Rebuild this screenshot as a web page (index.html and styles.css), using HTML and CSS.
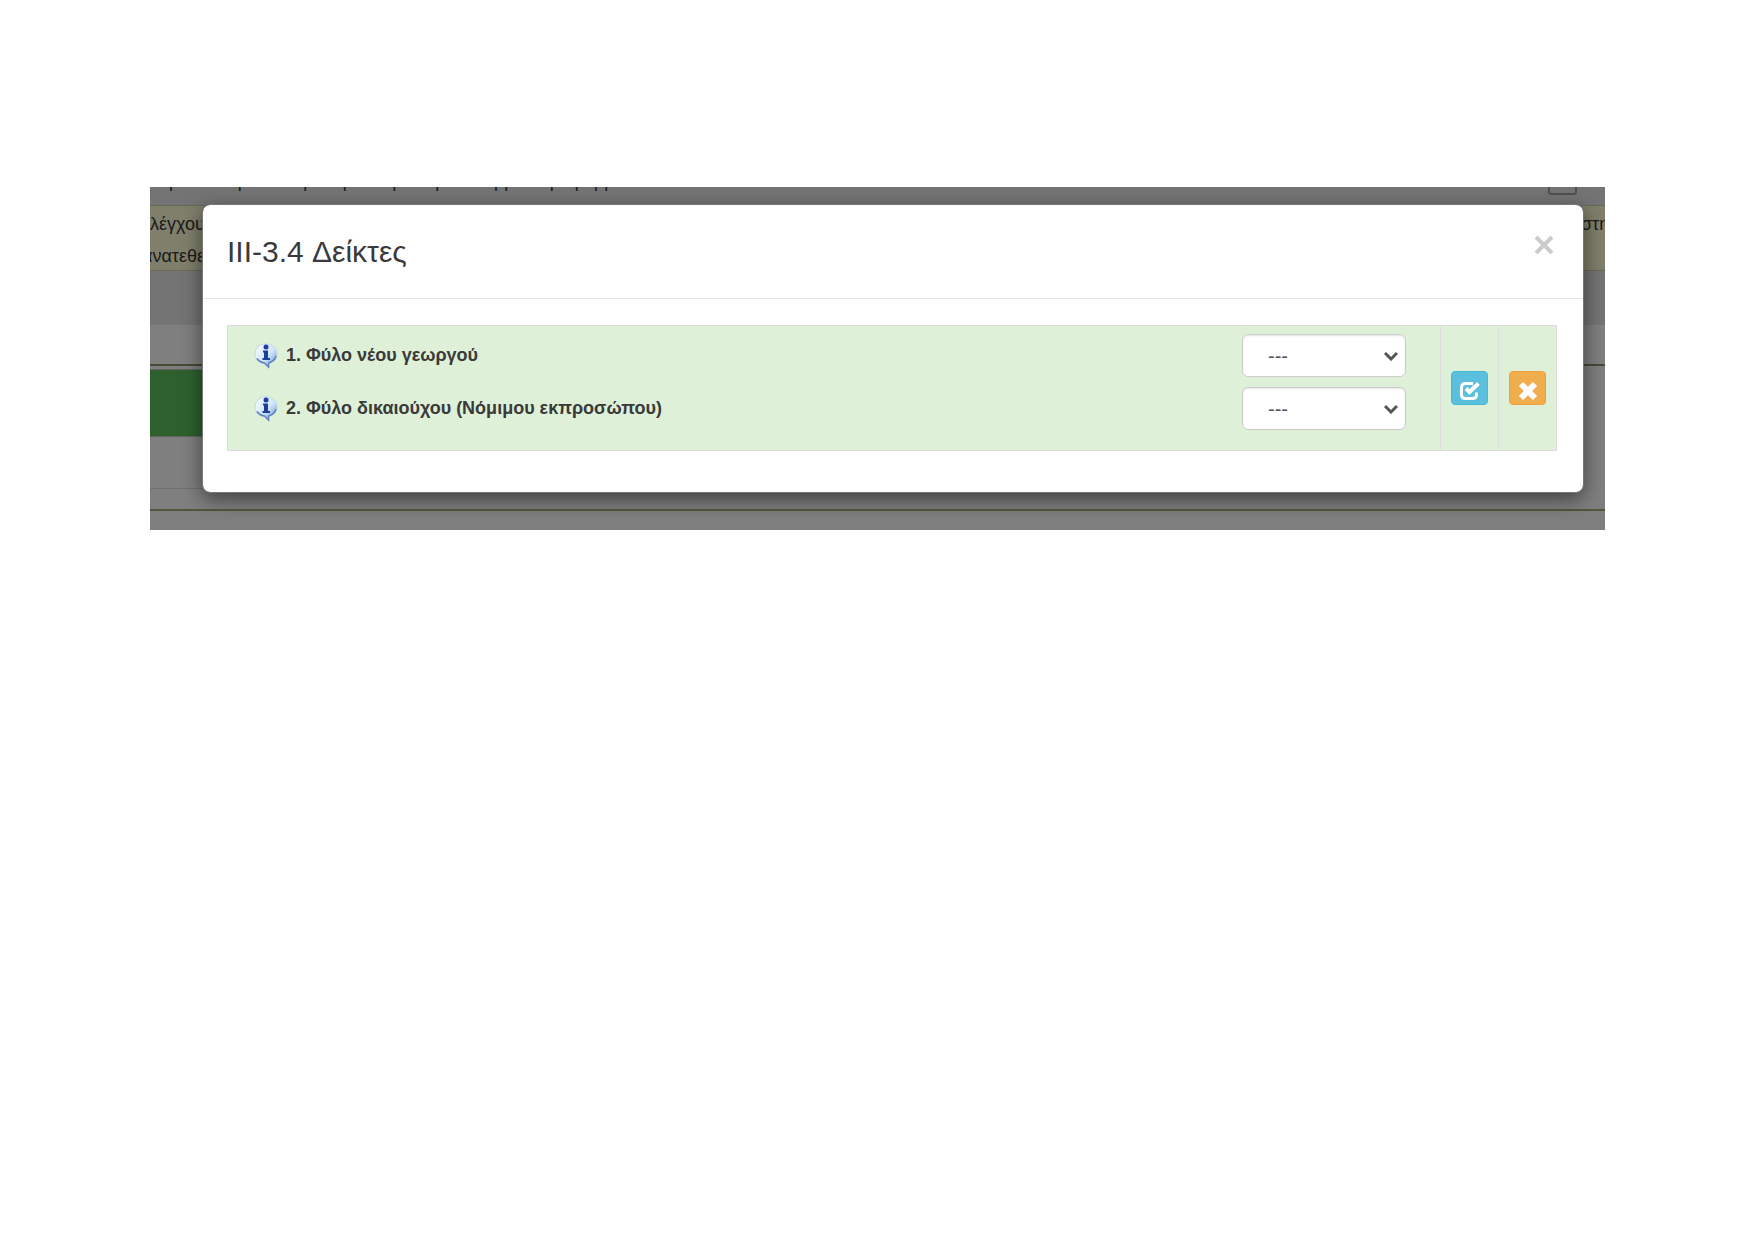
FILE: index.html
```
<!DOCTYPE html>
<html lang="el">

<head>
    <meta charset="UTF-8">
    <title>III-3.4 Δείκτες</title>
    <link rel="stylesheet" href="styles.css">
</head>

<body>
    <div class="screen">
        <div class="page">
            <div class="page-title">
                <span class="page-title-text">νορα λέοι τμ κάτον ρ κα ρολο η οτιε ρακτι ε ρρ κα η τι ρκρρ</span>
                <span class="page-tool"></span>
            </div>
            <div class="notice">
                <p class="notice-text">ελέγχου<br>ανατεθε</p>
                <p class="notice-text notice-end">στη</p>
            </div>
            <div class="toolbar"></div>
            <div class="row-head"></div>
            <div class="row-list">
                <div class="row-active"></div>
                <div class="row-plain"></div>
            </div>
            <div class="row-last"></div>
        </div>

        <div class="modal" role="dialog" aria-labelledby="modal-title">
            <div class="modal-header">
                <h1 class="modal-title" id="modal-title">III-3.4 Δείκτες</h1>
                <button type="button" class="close" aria-label="Κλείσιμο">
                    <svg width="20" height="20" viewBox="0 0 20 20">
                        <path d="M2 2L18 18M18 2L2 18" stroke="#cbcbcb" stroke-width="4" />
                    </svg>
                </button>
            </div>

            <form class="modal-body">
                <div class="indicators">
                    <div class="fields">
                        <div class="field">
                            <svg class="info" width="24" height="26" viewBox="0 0 24 26">
                                <use href="#info-icon" />
                            </svg>
                            <label for="farmer">1. Φύλο νέου γεωργού</label>
                            <select id="farmer" class="form-control">
                                <option>---</option>
                            </select>
                        </div>
                        <div class="field">
                            <svg class="info" width="24" height="26" viewBox="0 0 24 26">
                                <use href="#info-icon" />
                            </svg>
                            <label for="beneficiary">2. Φύλο δικαιούχου (Νόμιμου εκπροσώπου)</label>
                            <select id="beneficiary" class="form-control">
                                <option>---</option>
                            </select>
                        </div>
                    </div>
                    <div class="action">
                        <button type="button" class="btn btn-info" aria-label="Αποθήκευση">
                            <svg width="22" height="20" viewBox="0 0 22 20">
                                <path d="M14 2.500H6.500Q2.500 2.500 2.500 6.500V13.500Q2.500 17.500 6.500 17.500H13.500Q17.500 17.500 17.500 13.500V11.500" fill="none" stroke="#fff" stroke-width="3" />
                                <path d="M6.500 8.500L10.500 12L19.500 3" fill="none" stroke="#5bc0de" stroke-width="6" />
                                <path d="M7 7.500L10.500 11L19.500 2.500" fill="none" stroke="#fff" stroke-width="4" />
                            </svg>
                        </button>
                    </div>
                    <div class="action">
                        <button type="button" class="btn btn-warning" aria-label="Ακύρωση">
                            <svg width="20" height="20" viewBox="0 0 20 20">
                                <path d="M3 3L17 17M17 3L3 17" stroke="#fff" stroke-width="6" />
                            </svg>
                        </button>
                    </div>
                </div>
            </form>
        </div>
    </div>

    <!-- shared info bubble -->
    <svg class="sprite" width="0" height="0">
        <defs>
            <linearGradient id="bubble" x1="0" y1="0" x2="1" y2="1">
                <stop offset="0" stop-color="#fff" />
                <stop offset="0.550" stop-color="#cfe4fb" />
                <stop offset="1" stop-color="#5b86cf" />
            </linearGradient>
            <symbol id="info-icon" viewBox="0 0 24 26">
                <path d="M12 1C5.500 1 1 5.500 1 11C1 16 4.500 19.500 10 20.500L15 25V20.500C20 19 23 15.500 23 11C23 5.500 18.500 1 12 1Z" fill="url(#bubble)" stroke="#c3d5ea" />
                <path d="M3 15.500C5 18.500 7.500 19.500 10.500 20L14.500 24V20C18 19 21 17 22 13" fill="none" stroke="#5e83c3" stroke-width="1.500" />
                <circle cx="12" cy="4" r="2.500" fill="#1c3f9b" />
                <path d="M9 7.500H14V15H16V17H8.500V15H10V9.500H9Z" fill="#1c3f9b" />
            </symbol>
        </defs>
    </svg>
</body>

</html>
```
FILE: styles.css
```
* {
    box-sizing: border-box;
}

body {
    margin: 0;
    padding: 187px 150px;
    background-color: #fff;
    color: #3a3a3a;
    font-family: "Liberation Sans", Arial, sans-serif;
    font-size: 18px;
}

/* the dimmed page and the dialog share one grid cell */
.screen {
    display: grid;
    grid-template-columns: minmax(0, 1fr);
    overflow: hidden;
    background-color: #7f7f7f;
}

.page,
.modal {
    grid-area: 1 / 1;
}

.page {
    color: #1a1a1a;
}

.page-title {
    display: flex;
    justify-content: space-between;
    align-items: flex-start;
    height: 18px;
    padding-right: 28px;
    background-color: #747474;
}

.page-title-text {
    margin-top: -16px;
    line-height: 20px;
    white-space: nowrap;
}

.page-tool {
    width: 29px;
    height: 8px;
    border: 2px solid #505050;
    border-top: 0;
    border-radius: 0 0 3px 3px;
}

.notice {
    display: flex;
    justify-content: space-between;
    padding-top: 2px;
    border-top: 1px solid #696957;
    border-bottom: 1px solid #696957;
    background-color: #7f7f6b;
    line-height: 32px;
}

.notice-text {
    margin: 0 0 -2px -8px;
    white-space: nowrap;
}

.notice-end {
    margin-left: 0;
    width: 24px;
}

.toolbar {
    height: 54px;
    background-color: #747474;
}

.row-head {
    height: 41px;
    border-bottom: 2px solid #494938;
}

.row-list {
    width: 50%;
    padding-top: 3px;
}

.row-active {
    height: 68px;
    border-top: 1px solid #626262;
    border-bottom: 1px solid #626262;
    background-color: #2e602e;
}

.row-plain {
    height: 52px;
    border-bottom: 1px solid #707070;
}

.row-last {
    height: 22px;
    margin-bottom: 19px;
    border-bottom: 2px solid #54543f;
}

.modal {
    margin: 17px 21px 37px 52px;
    border: 1px solid #777;
    border-radius: 8px;
    background-color: #fff;
    background-clip: padding-box;
    box-shadow: 0 6px 20px rgba(0, 0, 0, 0.5);
}

.modal-header {
    display: flex;
    justify-content: space-between;
    align-items: flex-start;
    padding: 25px 24px 24px;
    border-bottom: 1px solid #e5e5e5;
}

.modal-title {
    margin: 0;
    font-size: 30px;
    font-weight: normal;
    line-height: 44px;
}

.close {
    display: flex;
    margin-top: 5px;
    margin-right: 5px;
    padding: 0;
    border: 0;
    background: none;
    cursor: pointer;
}

.modal-body {
    padding: 26px 26px 41px 24px;
}

.indicators {
    display: flex;
    border: 1px solid #ddd;
    background-color: #dff0d8;
}

.fields {
    flex: 1;
    display: grid;
    gap: 10px;
    padding: 8px 34px 20px 26px;
}

.field {
    display: flex;
    align-items: center;
}

.field label {
    flex: 1;
    margin-left: 8px;
    font-weight: bold;
}

.form-control {
    width: 164px;
    height: 43px;
    padding: 0 25px;
    border: 1px solid #ccc;
    border-radius: 6px;
    appearance: none;
    background: #fff url("data:image/svg+xml,%3Csvg xmlns='http://www.w3.org/2000/svg' width='14' height='10'%3E%3Cpath d='M1 2l6 6 6-6' fill='none' stroke='%23555' stroke-width='3'/%3E%3C/svg%3E") no-repeat right 7px center;
    box-shadow: inset 0 1px 2px rgba(0, 0, 0, 0.1);
    color: #555;
    font-family: inherit;
    font-size: 20px;
}

.action {
    display: flex;
    justify-content: center;
    align-items: center;
    width: 58px;
    border-left: 1px solid #ddd;
}

.btn {
    display: flex;
    justify-content: center;
    align-items: flex-end;
    width: 37px;
    height: 34px;
    padding: 0 0 3px;
    border: 1px solid;
    border-radius: 4px;
    cursor: pointer;
}

.btn-info {
    border-color: #46b8da;
    background-color: #5bc0de;
}

.btn-warning {
    border-color: #eea236;
    background-color: #f0ad4e;
}

.sprite {
    display: block;
}
```
